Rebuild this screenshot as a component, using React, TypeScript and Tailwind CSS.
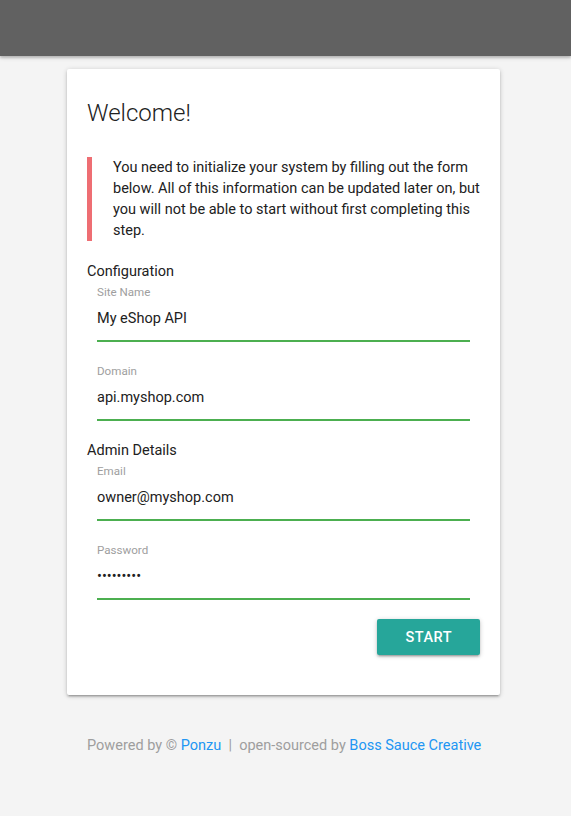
import { useState } from "react";

type Field = {
  label: string;
  name: string;
  type: string;
  value: string;
};

const configFields: Field[] = [
  { label: "Site Name", name: "name", type: "text", value: "My eShop API" },
  { label: "Domain", name: "domain", type: "text", value: "api.myshop.com" },
];

const adminFields: Field[] = [
  { label: "Email", name: "email", type: "email", value: "owner@myshop.com" },
  { label: "Password", name: "password", type: "password", value: "secret123" },
];

function InputField({ field }: { field: Field }) {
  const [value, setValue] = useState(field.value);
  return (
    <div className="mx-[10px] flex flex-col">
      <label className="h-[14px] text-[11.6px] leading-[12px] text-[#9e9e9e]">
        {field.label}
      </label>
      <div className="h-[42px] border-b-2 border-[#4caf50] pb-1">
        <input
          type={field.type}
          name={field.name}
          value={value}
          onChange={(e) => setValue(e.target.value)}
          className="h-full w-full bg-transparent text-[14.5px] text-[#212121] outline-none"
        />
      </div>
    </div>
  );
}

export default function App() {
  return (
    <div className="min-h-[816px] bg-[#f4f4f4] font-['Roboto',sans-serif] text-[14.5px] leading-[21px] text-[#212121]">
      {/* верхняя панель */}
      <nav className="h-14 bg-[#616161] shadow-[0_2px_2px_0_rgba(0,0,0,0.14),0_1px_5px_0_rgba(0,0,0,0.2)]" />

      <div className="ml-[67px] mt-[13px] w-[433px] rounded-[2px] bg-white px-5 pb-10 pt-7 shadow-[0_2px_2px_0_rgba(0,0,0,0.14),0_3px_1px_-2px_rgba(0,0,0,0.12),0_1px_5px_0_rgba(0,0,0,0.2)]">
        <h1 className="text-[24px] font-light leading-8 text-[#212121]">
          Welcome!
        </h1>

        <blockquote className="mt-7 border-l-[5px] border-[#ee6e73] pl-[21px]">
          You need to initialize your system by filling out the form below. All
          of this information can be updated later on, but you will not be able
          to start without first completing this step.
        </blockquote>

        <form onSubmit={(e) => e.preventDefault()}>
          <h2 className="mt-5">Configuration</h2>
          <div className="mt-1 flex flex-col gap-[23px]">
            {configFields.map((f) => (
              <InputField key={f.name} field={f} />
            ))}
          </div>

          <h2 className="mt-[19px]">Admin Details</h2>
          <div className="mt-1 flex flex-col gap-[23px]">
            {adminFields.map((f) => (
              <InputField key={f.name} field={f} />
            ))}
          </div>

          <div className="mt-[19px] flex justify-end">
            <button
              type="submit"
              className="h-9 rounded-[2px] bg-[#26a69a] px-7 text-[14.5px] font-medium uppercase tracking-[0.5px] text-white shadow-[0_2px_2px_0_rgba(0,0,0,0.14),0_3px_1px_-2px_rgba(0,0,0,0.12),0_1px_5px_0_rgba(0,0,0,0.2)]"
            >
              Start
            </button>
          </div>
        </form>
      </div>

      <p className="ml-[87px] mt-10 text-[#9e9e9e]">
        Powered by &copy; <a className="text-[#2196f3]">Ponzu</a>&nbsp; | &nbsp;open-sourced by{" "}
        <a className="text-[#2196f3]">Boss Sauce Creative</a>
      </p>
    </div>
  );
}
